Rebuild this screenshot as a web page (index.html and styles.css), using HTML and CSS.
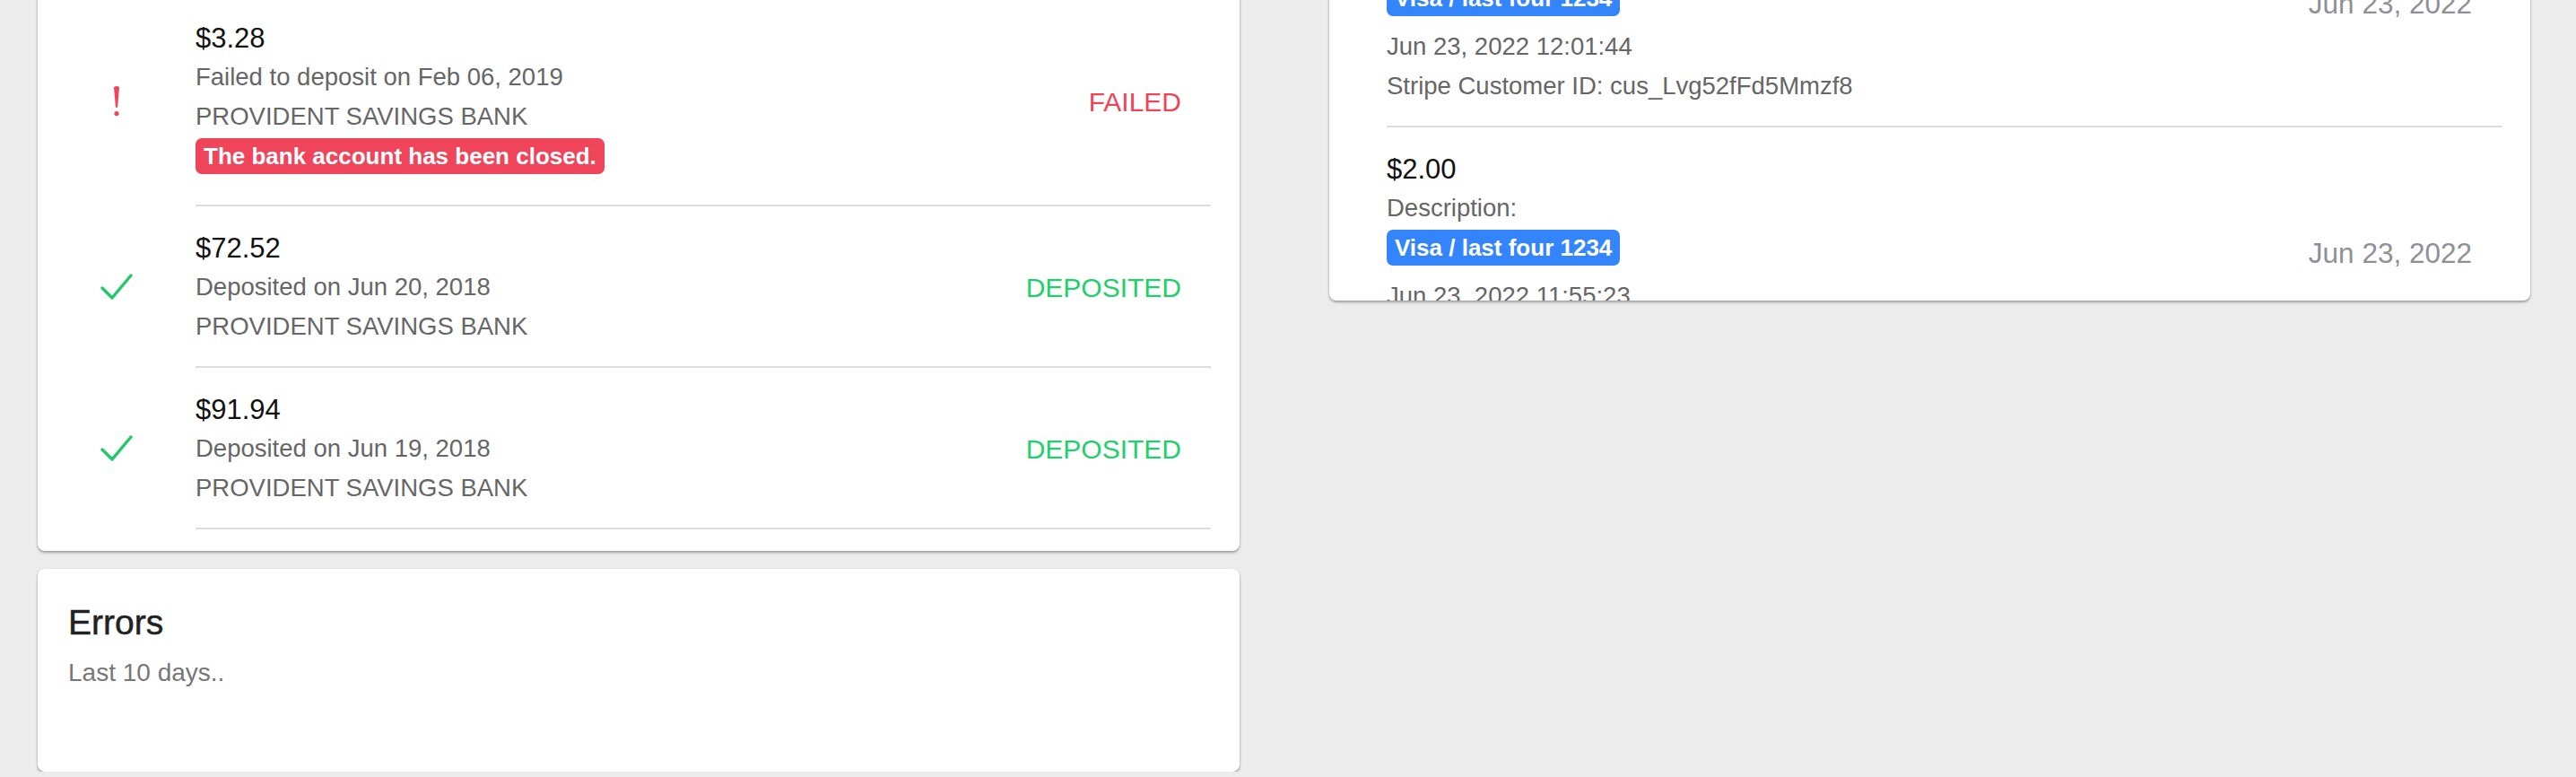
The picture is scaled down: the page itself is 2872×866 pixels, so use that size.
FILE: index.html
```html
<!DOCTYPE html>
<html lang="en">
<head>
<meta charset="utf-8">
<title>Deposits</title>
<link rel="stylesheet" href="styles.css">
</head>
<body>
<main class="layout">
  <section class="col">
    <div class="card deposits">
      <div class="item">
        <div class="item-icon">
          <svg class="check" width="36" height="30" viewBox="0 0 36 30"><polyline points="2,16 13,27 34,2" fill="none" stroke="#22c96b" stroke-width="3.4" stroke-linecap="round" stroke-linejoin="round"/></svg>
        </div>
        <div class="item-body">
          <div class="text">
            <div class="amount">$48.10</div>
            <div class="line">Deposited on Mar 04, 2019</div>
            <div class="line">PROVIDENT SAVINGS BANK</div>
          </div>
          <div class="status ok">DEPOSITED</div>
        </div>
      </div>
      <div class="item">
        <div class="item-icon">
          <svg class="bang" width="14" height="38" viewBox="0 0 14 38"><path d="M4 3.2 Q7 0.6 10 3.2 L8.1 25.2 Q7 26.6 5.9 25.2 Z" fill="#ef4459"/><circle cx="7" cy="32.6" r="2.6" fill="#ef4459"/></svg>
        </div>
        <div class="item-body">
          <div class="text">
            <div class="amount">$3.28</div>
            <div class="line">Failed to deposit on Feb 06, 2019</div>
            <div class="line">PROVIDENT SAVINGS BANK</div>
            <div class="badge red">The bank account has been closed.</div>
          </div>
          <div class="status fail">FAILED</div>
        </div>
      </div>
      <div class="item">
        <div class="item-icon">
          <svg class="check" width="36" height="30" viewBox="0 0 36 30"><polyline points="2,16 13,27 34,2" fill="none" stroke="#22c96b" stroke-width="3.4" stroke-linecap="round" stroke-linejoin="round"/></svg>
        </div>
        <div class="item-body">
          <div class="text">
            <div class="amount">$72.52</div>
            <div class="line">Deposited on Jun 20, 2018</div>
            <div class="line">PROVIDENT SAVINGS BANK</div>
          </div>
          <div class="status ok">DEPOSITED</div>
        </div>
      </div>
      <div class="item">
        <div class="item-icon">
          <svg class="check" width="36" height="30" viewBox="0 0 36 30"><polyline points="2,16 13,27 34,2" fill="none" stroke="#22c96b" stroke-width="3.4" stroke-linecap="round" stroke-linejoin="round"/></svg>
        </div>
        <div class="item-body">
          <div class="text">
            <div class="amount">$91.94</div>
            <div class="line">Deposited on Jun 19, 2018</div>
            <div class="line">PROVIDENT SAVINGS BANK</div>
          </div>
          <div class="status ok">DEPOSITED</div>
        </div>
      </div>
    </div>
    <div class="card errors">
      <h2 class="errors-title">Errors</h2>
      <p class="errors-sub">Last 10 days..</p>
    </div>
  </section>
  <section class="col">
    <div class="card payments">
      <div class="pay-item">
        <div class="text">
          <div class="amount">$2.00</div>
          <div class="line">Description:</div>
          <div class="badge blue">Visa / last four 1234</div>
          <div class="line">Jun 23, 2022 12:01:44</div>
          <div class="line">Stripe Customer ID: cus_Lvg52fFd5Mmzf8</div>
        </div>
        <div class="pay-date">Jun 23, 2022</div>
      </div>
      <div class="pay-item">
        <div class="text">
          <div class="amount">$2.00</div>
          <div class="line">Description:</div>
          <div class="badge blue">Visa / last four 1234</div>
          <div class="line">Jun 23, 2022 11:55:23</div>
          <div class="line">Stripe Customer ID: cus_Lvg52fFd5Mmzf8</div>
        </div>
        <div class="pay-date">Jun 23, 2022</div>
      </div>
    </div>
  </section>
</main>
</body>
</html>
```
FILE: styles.css
```css
html, body {
  margin: 0;
  padding: 0;
  background: #ececec;
  font-family: "Liberation Sans", Arial, sans-serif;
  overflow: hidden;
}

.layout {
  display: grid;
  grid-template-columns: 1340px 1339px;
  column-gap: 100px;
  align-items: start;
  padding-left: 42px;
  margin-top: -184px;
}

.col {
  display: flex;
  flex-direction: column;
}

.card {
  background: #fff;
  border-radius: 8px;
  box-shadow: 0 2px 3px rgba(0, 0, 0, 0.32), 0 0 2px rgba(0, 0, 0, 0.08);
}

.deposits {
  padding-bottom: 24px;
}

.item {
  display: flex;
}

.item-icon {
  width: 176px;
  flex: none;
  display: flex;
  align-items: center;
  justify-content: center;
}

.item-body {
  flex: 1;
  display: flex;
  align-items: center;
  justify-content: space-between;
  margin-right: 32px;
  padding: 26px 33px 22px 0;
  border-bottom: 2px solid #dedede;
}

.amount {
  font-size: 31px;
  line-height: 42px;
  color: #111;
}

.line {
  font-size: 27.5px;
  line-height: 44px;
  color: #666;
}

.badge {
  display: block;
  width: fit-content;
  height: 40px;
  line-height: 40px;
  padding: 0 9px;
  margin: 2px 0 12px;
  border-radius: 7px;
  font-size: 26px;
  font-weight: bold;
  color: #fff;
}

.badge.red {
  background: #ef445a;
}

.badge.blue {
  background: #3485fc;
}

.status {
  font-size: 30px;
}

.status.ok {
  color: #20d06d;
}

.status.fail {
  color: #ee4459;
}

.errors {
  margin-top: 20px;
  height: 226px;
  box-sizing: border-box;
  padding: 37px 34px;
}

.errors-title {
  margin: 0;
  font-size: 39px;
  line-height: 45px;
  font-weight: normal;
  color: #222;
  -webkit-text-stroke: 0.5px #222;
}

.errors-sub {
  margin: 14px 0 0;
  font-size: 28px;
  line-height: 40px;
  color: #777;
}

.payments {
  height: 519px;
  box-sizing: border-box;
  padding-top: 48px;
  overflow: hidden;
}

.pay-item {
  display: flex;
  align-items: center;
  justify-content: space-between;
  margin: 0 31px 0 64px;
  padding: 26px 34px 22px 0;
  border-bottom: 2px solid #dedede;
}

.pay-date {
  font-size: 31.5px;
  color: #8e9097;
}
```
